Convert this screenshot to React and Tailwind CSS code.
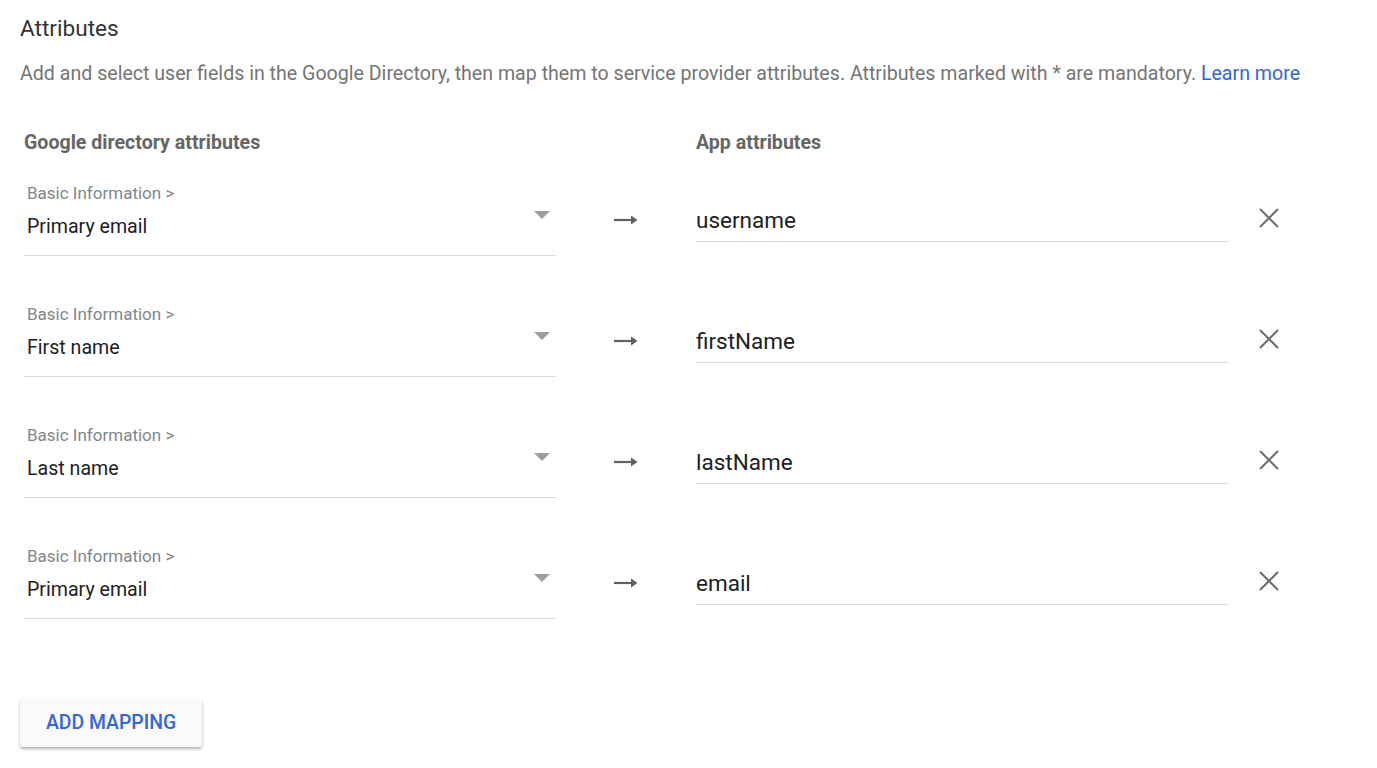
const rows = [
  { source: 'Primary email', target: 'username' },
  { source: 'First name', target: 'firstName' },
  { source: 'Last name', target: 'lastName' },
  { source: 'Primary email', target: 'email' },
];

function Arrow() {
  return (
    <svg width="24" height="12" viewBox="0 0 24 12" className="text-[#616161]">
      <path d="M0 6h19" stroke="currentColor" strokeWidth="2.2" />
      <path d="M17 1.5 L23.5 6 L17 10.5 Z" fill="currentColor" />
    </svg>
  );
}

function Close() {
  return (
    <svg width="22" height="22" viewBox="0 0 22 22" className="text-[#6e6e6e]">
      <path d="M2 2L20 20M20 2L2 20" stroke="currentColor" strokeWidth="2" />
    </svg>
  );
}

function MappingRow({ source, target }) {
  return (
    <div className="grid grid-cols-[532px_140px_533px_auto] items-start">
      <div className="border-b border-[#dcdcdc] pb-4 pl-[3px] pr-[6px]">
        <div className="text-[17px] leading-[18px] text-[#80868b]">Basic Information &gt;</div>
        <div className="mt-[13px] flex items-center justify-between">
          <span className="text-[19.6px] leading-[24px] text-[#202124]">{source}</span>
          <svg width="16" height="8" viewBox="0 0 16 8" className="-mt-[25px]">
            <path d="M0 0h16L8 8z" fill="#9e9e9e" />
          </svg>
        </div>
      </div>
      <div className="flex justify-center pt-[30px]">
        <Arrow />
      </div>
      <div className="mt-[22px] border-b border-[#dcdcdc] pb-[6px]">
        <span className="text-[22.5px] leading-[28px] text-[#202124]">{target}</span>
      </div>
      <div className="pl-[29px] pt-[23px]">
        <Close />
      </div>
    </div>
  );
}

export default function App() {
  return (
    <div className="min-h-screen bg-white font-['Roboto',sans-serif] px-5 pt-[15px]">
      <h2 className="text-[22.6px] leading-[28px] text-[#333333]">Attributes</h2>
      <p className="mt-[19px] whitespace-nowrap text-[19.6px] leading-[24px] text-[#757575]">
        Add and select user fields in the Google Directory, then map them to service provider attributes. Attributes
        marked with * are mandatory. <a className="text-[#3367d6]">Learn more</a>
      </p>

      <div className="pl-1">
        <div className="mt-[45px] grid grid-cols-[532px_140px_533px_auto] text-[19.6px] font-bold leading-[24px] text-[#666666]">
          <div>Google directory attributes</div>
          <div />
          <div>App attributes</div>
        </div>
        <div className="mt-[29px] flex flex-col gap-[49px]">
          {rows.map((r, i) => (
            <MappingRow key={i} {...r} />
          ))}
        </div>
      </div>

      <button className="mt-[79px] h-[49px] w-[182px] rounded-[3px] bg-[#fafafa] text-[19.4px] font-medium text-[#3367d6] shadow-[0_2px_3px_rgba(0,0,0,0.3)]">
        ADD MAPPING
      </button>
    </div>
  );
}
